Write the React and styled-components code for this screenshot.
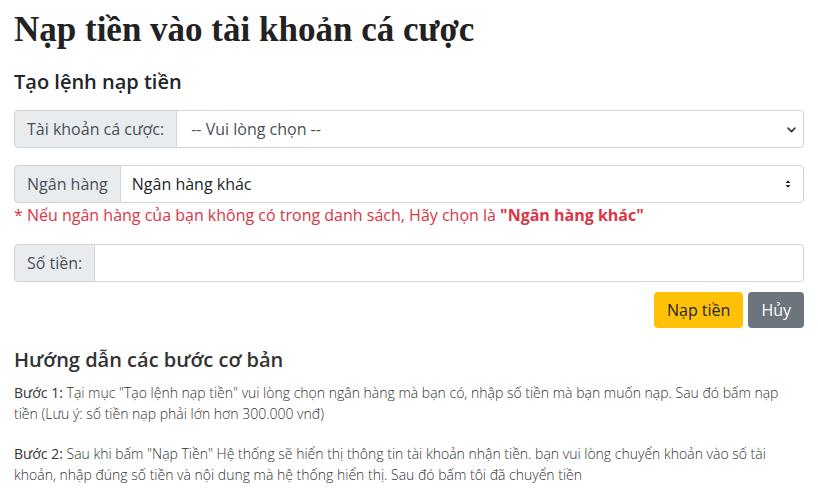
import styled, { createGlobalStyle } from "styled-components";

const GlobalStyle = createGlobalStyle`
  body {
    margin: 0;
    background: #fff;
    font-family: "Open Sans", "Liberation Sans", sans-serif;
    color: #212529;
  }
`;

const App = () => {
  return (
    <>
      <GlobalStyle />
      <Page>
        <Title>Nạp tiền vào tài khoản cá cược</Title>
        <SubTitle>Tạo lệnh nạp tiền</SubTitle>
        <Form>
          <InputGroup>
            <Addon>Tài khoản cá cược:</Addon>
            <Select defaultValue="">
              <option value="">-- Vui lòng chọn --</option>
            </Select>
          </InputGroup>

          <Field>
            <InputGroup>
              <Addon>Ngân hàng</Addon>
              <NativeSelect defaultValue="other">
                <option value="other">Ngân hàng khác</option>
              </NativeSelect>
            </InputGroup>
            <Note>
              * Nếu ngân hàng của bạn không có trong danh sách, Hãy chọn là{" "}
              <b>"Ngân hàng khác"</b>
            </Note>
          </Field>

          <InputGroup>
            <Addon>Số tiền:</Addon>
            <Input type="text" />
          </InputGroup>

          <Actions>
            <Button $variant="warning">Nạp tiền</Button>
            <Button $variant="secondary">Hủy</Button>
          </Actions>
        </Form>

        <GuideTitle>Hướng dẫn các bước cơ bản</GuideTitle>
        <Step>
          <strong>Bước 1:</strong> Tại mục "Tạo lệnh nạp tiền" vui lòng chọn ngân
          hàng mà bạn có, nhập số tiền mà bạn muốn nạp. Sau đó bấm nạp tiền (Lưu
          ý: số tiền nạp phải lớn hơn 300.000 vnđ)
        </Step>
        <Step>
          <strong>Bước 2:</strong> Sau khi bấm "Nạp Tiền" Hệ thống sẽ hiển thị
          thông tin tài khoản nhận tiền. bạn vui lòng chuyển khoản vào số tài
          khoản, nhập đúng số tiền và nội dung mà hệ thống hiển thị. Sau đó bấm
          tôi đã chuyển tiền
        </Step>
      </Page>
    </>
  );
};

export default App;

const Page = styled.div`
  padding: 6px 14px 0;
  width: 790px;
`;

const Title = styled.h1`
  margin: 0;
  font-family: "Liberation Serif", "Times New Roman", serif;
  font-size: 35px;
  font-weight: 700;
  line-height: 48px;
  color: #222;
`;

const SubTitle = styled.h5`
  margin: 16px 0 16px;
  font-size: 20px;
  font-weight: 600;
  line-height: 24px;
  color: #212529;
`;

const Form = styled.div`
  display: flex;
  flex-direction: column;
  gap: 17px;
`;

const Field = styled.div`
  display: flex;
  flex-direction: column;
`;

const InputGroup = styled.div`
  display: flex;
  height: 38px;
`;

const Addon = styled.span`
  display: flex;
  align-items: center;
  padding: 0 12px;
  font-size: 16px;
  color: #495057;
  background: #e9ecef;
  border: 1px solid #ced4da;
  border-radius: 4px 0 0 4px;
  white-space: nowrap;
`;

const Select = styled.select`
  flex: 1;
  min-width: 0;
  margin-left: -1px;
  padding: 0 36px 0 14px;
  font-family: "Open Sans", "Liberation Sans", sans-serif;
  font-size: 16px;
  color: #495057;
  background: #fff
    url("data:image/svg+xml,%3csvg xmlns='http://www.w3.org/2000/svg' viewBox='0 0 16 16'%3e%3cpath fill='none' stroke='%23343a40' stroke-linecap='round' stroke-linejoin='round' stroke-width='2.4' d='M3 6l5 5 5-5'/%3e%3c/svg%3e")
    no-repeat right 6px center / 11px 11px;
  border: 1px solid #ced4da;
  border-radius: 0 4px 4px 0;
  appearance: none;
  outline: none;
`;

const NativeSelect = styled(Select)`
  padding-left: 11px;
  color: #212529;
  background: #fff
    url("data:image/svg+xml,%3csvg xmlns='http://www.w3.org/2000/svg' viewBox='0 0 16 16'%3e%3cpath fill='%23222' d='M4 6.5L8 2l4 4.5zM4 9.5L8 14l4-4.5z'/%3e%3c/svg%3e")
    no-repeat right 10px center / 10px 12px;
`;

const Input = styled.input`
  flex: 1;
  min-width: 0;
  margin-left: -1px;
  padding: 0 12px;
  font-size: 16px;
  border: 1px solid #ced4da;
  border-radius: 0 4px 4px 0;
  outline: none;
`;

const Note = styled.div`
  font-size: 16px;
  line-height: 24px;
  color: #dc3545;

  b {
    font-weight: 700;
  }
`;

const Actions = styled.div`
  display: flex;
  justify-content: flex-end;
  gap: 5px;
  margin-top: -7px;
`;

const Button = styled.button`
  height: 36px;
  padding: 0 12px;
  font-family: "Open Sans", "Liberation Sans", sans-serif;
  font-size: 16px;
  border: 1px solid transparent;
  border-radius: 4px;
  cursor: pointer;
  color: ${(p) => (p.$variant === "warning" ? "#212529" : "#fff")};
  background: ${(p) => (p.$variant === "warning" ? "#ffc107" : "#6c757d")};
`;

const GuideTitle = styled.h5`
  margin: 20px 0 10px;
  font-size: 20px;
  font-weight: 600;
  line-height: 24px;
  color: #333;
`;

const Step = styled.p`
  margin: 0 0 19px;
  font-size: 14px;
  line-height: 21px;
  font-weight: 300;
  color: #333;

  strong {
    font-weight: 400;
  }
`;
